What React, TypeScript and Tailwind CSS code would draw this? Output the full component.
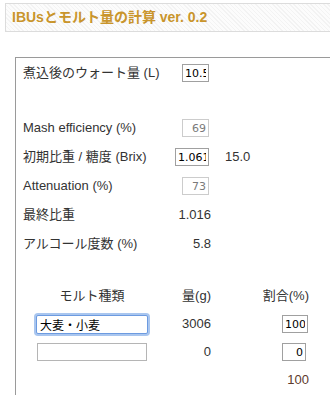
import React from "react";

const inputBase =
  "h-[18px] border bg-white px-[2px] text-[11px] outline-none font-['DejaVu_Sans','Noto_Sans_CJK_JP',sans-serif]";
const inputOn = `${inputBase} border-[#a0a0a0] text-black`;
const inputOff = `${inputBase} border-[#cccccc] text-right text-[#7a7a7a]`;

function Row({ label, children, extra }: { label: string; children?: React.ReactNode; extra?: React.ReactNode }) {
  return (
    <div className="flex h-[22px] items-center text-[#333]">
      <div className="w-[152px] text-[#333]">{label}</div>
      <div className="flex w-[36px] justify-end">{children}</div>
      {extra}
    </div>
  );
}

export default function App() {
  return (
    <div className="min-h-[395px] w-[330px] overflow-hidden bg-white text-[13px] text-[#333] font-['Liberation_Sans','Noto_Sans_CJK_JP',sans-serif]">
      <div className="ml-[5px] mt-[3px] flex h-[29px] w-[400px] items-center border border-[#dcdcdc] bg-[repeating-linear-gradient(45deg,#f3f3f3_0px,#f3f3f3_1px,#fcfcfc_1px,#fcfcfc_3px)] pl-[6px]">
        <h1 className="text-[14px] font-bold text-[#c9952c]">IBUsとモルト量の計算 ver. 0.2</h1>
      </div>

      <div className="ml-[15px] mt-[25px] w-[400px] border-l border-t border-[#9a9a9a] pb-[10px] pl-[7px] pt-[4px]">
        <div className="flex flex-col gap-[7px]">
          <Row label="煮込後のウォート量 (L)">
            <input className={`${inputOn} mr-[2px] w-[27px]`} defaultValue="10.5" />
          </Row>
          <div className="mt-[26px]">
            <Row label="Mash efficiency (%)">
              <input className={`${inputOff} mr-[2px] w-[27px]`} defaultValue="69" readOnly />
            </Row>
          </div>
          <Row label="初期比重 / 糖度 (Brix)" extra={<span className="ml-[14px]">15.0</span>}>
            <input className={`${inputOn} mr-[2px] w-[34px]`} defaultValue="1.061" />
          </Row>
          <Row label="Attenuation (%)">
            <input className={`${inputOff} mr-[2px] w-[27px]`} defaultValue="73" readOnly />
          </Row>
          <Row label="最終比重">
            <span>1.016</span>
          </Row>
          <Row label="アルコール度数 (%)">
            <span>5.8</span>
          </Row>
        </div>

        <div className="-ml-[7px] mt-[30px] flex flex-col gap-[6px]">
          <div className="grid h-[22px] grid-cols-[20px_112px_63px_98px] items-center">
            <span />
            <span className="text-center">モルト種類</span>
            <span className="text-right">量(g)</span>
            <span className="text-right">割合(%)</span>
          </div>
          <div className="grid h-[22px] grid-cols-[20px_112px_63px_98px] items-center">
            <span />
            <input
              className="h-[19px] w-[112px] rounded-[2px] border border-[#6d9be0] bg-white px-[3px] text-[12px] text-black shadow-[0_0_0_2px_#a9c6ef] outline-none"
              defaultValue="大麦・小麦"
            />
            <span className="text-right">3006</span>
            <div className="flex justify-end pr-[1px]">
              <input className={`${inputOn} w-[26px] text-right`} defaultValue="100" />
            </div>
          </div>
          <div className="grid h-[22px] grid-cols-[20px_112px_63px_98px] items-center">
            <span />
            <input className="ml-[1px] h-[18px] w-[110px] border border-[#b5b5b5] bg-white outline-none" defaultValue="" />
            <span className="text-right">0</span>
            <div className="flex justify-end pr-[3px]">
              <input className={`${inputOn} w-[24px] text-right`} defaultValue="0" />
            </div>
          </div>
          <div className="grid h-[22px] grid-cols-[20px_112px_63px_98px] items-center">
            <span />
            <span />
            <span />
            <span className="text-right text-[#5e3a2c]">100</span>
          </div>
        </div>
      </div>
    </div>
  );
}
